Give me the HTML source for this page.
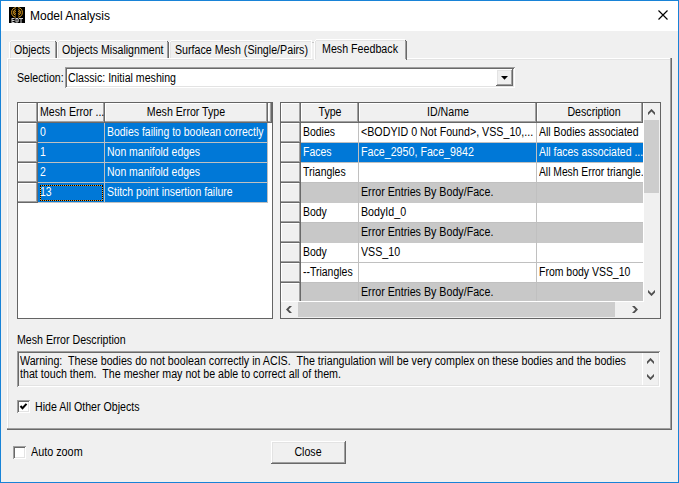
<!DOCTYPE html>
<html><head><meta charset="utf-8">
<style>
*{margin:0;padding:0;box-sizing:border-box}
html,body{width:679px;height:483px;overflow:hidden;background:#f0f0f0}
body{position:relative;font-family:"Liberation Sans",sans-serif;font-size:12px;color:#000}
.a{position:absolute}
.t{position:absolute;white-space:nowrap;line-height:18px;transform-origin:0 0}
.clip{position:absolute;overflow:hidden}
</style></head><body>
<div class="a" style="left:0px;top:0px;width:679px;height:483px;border:1px solid #1883d7"></div>
<div class="a" style="left:1px;top:1px;width:677px;height:30px;background:#fff"></div>
<div class="a" style="left:9px;top:7px;width:16px;height:16px;background:#000;overflow:hidden">
<svg width="16" height="16" viewBox="0 0 16 16">
<g stroke="#e0a020" stroke-width="1" fill="none">
<path d="M6.8 0.6A5.2 4.9 0 0 0 6.8 10.2"/><path d="M6.8 2.6A3.2 2.9 0 0 0 6.8 8.2"/><path d="M6.8 4.3A1.2 1.1 0 0 0 6.8 6.5"/>
<path d="M9.2 0.6A5.2 4.9 0 0 1 9.2 10.2"/><path d="M9.2 2.6A3.2 2.9 0 0 1 9.2 8.2"/><path d="M9.2 4.3A1.2 1.1 0 0 1 9.2 6.5"/>
</g>
<g fill="#cfcfcf"><path d="M2.5 11h3v1h-2v1h2v1h-2v1h2v1h-3z"/><path d="M6.5 11h2.2l1 1v2.5l-1 1h-2.2zM7.5 12v2.5h1v-2.5z"/><path d="M10 11h4v1h-1.5v4h-1v-4h-1.5z"/></g>
</svg></div>
<div class="t" style="left:30px;top:7px;font-size:12px;color:#000;transform:scaleX(1.0);">Model Analysis</div>
<svg class="a" style="left:657px;top:9px" width="12" height="12" viewBox="0 0 12 12"><path d="M1.5 1.5L10.5 10.5M10.5 1.5L1.5 10.5" stroke="#000" stroke-width="1.15"/></svg>
<div class="a" style="left:7px;top:58px;width:665px;height:372px;box-shadow:inset -1px -1px #696969,inset -2px -2px #a0a0a0,inset 1px 1px #fff,inset 2px 2px #e3e3e3"></div>
<div class="a" style="left:11px;top:40px;width:44px;height:1px;background:#fff"></div>
<div class="a" style="left:10px;top:41px;width:1px;height:1px;background:#fff"></div>
<div class="a" style="left:9px;top:42px;width:1px;height:16px;background:#fff"></div>
<div class="a" style="left:10px;top:42px;width:1px;height:16px;background:#e3e3e3"></div>
<div class="a" style="left:11px;top:41px;width:43px;height:1px;background:#e3e3e3"></div>
<div class="a" style="left:55px;top:41px;width:1px;height:1px;background:#696969"></div>
<div class="a" style="left:56px;top:42px;width:1px;height:16px;background:#696969"></div>
<div class="a" style="left:55px;top:42px;width:1px;height:16px;background:#a0a0a0"></div>
<div class="t" style="left:14px;top:41px;font-size:12px;color:#000;transform:scaleX(0.885);">Objects</div>
<div class="a" style="left:59px;top:40px;width:108px;height:1px;background:#fff"></div>
<div class="a" style="left:58px;top:41px;width:1px;height:1px;background:#fff"></div>
<div class="a" style="left:57px;top:42px;width:1px;height:16px;background:#fff"></div>
<div class="a" style="left:58px;top:42px;width:1px;height:16px;background:#e3e3e3"></div>
<div class="a" style="left:59px;top:41px;width:107px;height:1px;background:#e3e3e3"></div>
<div class="a" style="left:167px;top:41px;width:1px;height:1px;background:#696969"></div>
<div class="a" style="left:168px;top:42px;width:1px;height:16px;background:#696969"></div>
<div class="a" style="left:167px;top:42px;width:1px;height:16px;background:#a0a0a0"></div>
<div class="t" style="left:62px;top:41px;font-size:12px;color:#000;transform:scaleX(0.885);">Objects Misalignment</div>
<div class="a" style="left:171px;top:40px;width:141px;height:1px;background:#fff"></div>
<div class="a" style="left:170px;top:41px;width:1px;height:1px;background:#fff"></div>
<div class="a" style="left:169px;top:42px;width:1px;height:16px;background:#fff"></div>
<div class="a" style="left:170px;top:42px;width:1px;height:16px;background:#e3e3e3"></div>
<div class="a" style="left:171px;top:41px;width:140px;height:1px;background:#e3e3e3"></div>
<div class="a" style="left:312px;top:41px;width:1px;height:1px;background:#696969"></div>
<div class="a" style="left:313px;top:42px;width:1px;height:16px;background:#696969"></div>
<div class="a" style="left:312px;top:42px;width:1px;height:16px;background:#a0a0a0"></div>
<div class="t" style="left:175px;top:41px;font-size:12px;color:#000;transform:scaleX(0.89);">Surface Mesh (Single/Pairs)</div>
<div class="a" style="left:311px;top:41px;width:1px;height:18px;background:#fff"></div>
<div class="a" style="left:312px;top:41px;width:2px;height:18px;background:#f0f0f0"></div>
<div class="a" style="left:312px;top:42px;width:2px;height:1px;background:#c8c8c8"></div>
<div class="a" style="left:314px;top:41px;width:92px;height:19px;background:#f0f0f0"></div>
<div class="a" style="left:316px;top:39px;width:89px;height:1px;background:#fff"></div>
<div class="a" style="left:315px;top:40px;width:1px;height:1px;background:#fff"></div>
<div class="a" style="left:314px;top:41px;width:1px;height:19px;background:#fff"></div>
<div class="a" style="left:315px;top:41px;width:1px;height:18px;background:#e3e3e3"></div>
<div class="a" style="left:316px;top:40px;width:88px;height:1px;background:#e3e3e3"></div>
<div class="a" style="left:405px;top:40px;width:1px;height:1px;background:#696969"></div>
<div class="a" style="left:406px;top:41px;width:1px;height:19px;background:#696969"></div>
<div class="a" style="left:405px;top:41px;width:1px;height:18px;background:#a0a0a0"></div>
<div class="t" style="left:322px;top:40px;font-size:12px;color:#000;transform:scaleX(0.89);">Mesh Feedback</div>
<div class="t" style="left:17px;top:69px;font-size:12px;color:#000;transform:scaleX(0.885);">Selection:</div>
<div class="a" style="left:65px;top:67px;width:450px;height:21px;background:#fff;box-shadow:inset 1px 1px #a0a0a0,inset -1px -1px #fff,inset 2px 2px #696969,inset -2px -2px #e3e3e3"></div>
<div class="t" style="left:68px;top:69px;font-size:12px;color:#000;transform:scaleX(0.885);">Classic: Initial meshing</div>
<div class="a" style="left:496px;top:69px;width:17px;height:17px;background:#f0f0f0;box-shadow:inset -1px -1px #696969,inset 1px 1px #fff,inset -2px -2px #a0a0a0,inset 2px 2px #e3e3e3"></div>
<svg class="a" style="left:501px;top:76px" width="8" height="5"><path d="M0 0H7L3.5 3.8Z" fill="#000"/></svg>
<div class="a" style="left:17px;top:102px;width:256px;height:217px;border:1px solid #646464;background:#fff"></div>
<div class="a" style="left:18px;top:103px;width:20px;height:20px;background:#f0f0f0;box-shadow:inset -1px -1px #696969,inset -2px -2px #a0a0a0,inset 1px 1px #fff"></div>
<div class="a" style="left:38px;top:103px;width:67px;height:20px;background:#f0f0f0;box-shadow:inset -1px -1px #696969,inset -2px -2px #a0a0a0,inset 1px 1px #fff"></div>
<div class="t" style="left:40px;top:103px;font-size:12px;color:#000;transform:scaleX(0.885);">Mesh Error ...</div>
<div class="a" style="left:105px;top:103px;width:163px;height:20px;background:#f0f0f0;box-shadow:inset -1px -1px #696969,inset -2px -2px #a0a0a0,inset 1px 1px #fff"></div>
<div class="t" style="left:36px;width:300px;text-align:center;top:103px;font-size:12px;color:#000;transform:scaleX(0.885);transform-origin:50% 0">Mesh Error Type</div>
<div class="a" style="left:268px;top:103px;width:4px;height:20px;background:#f0f0f0;box-shadow:inset -1px -1px #696969,inset -2px -2px #a0a0a0,inset 1px 1px #fff"></div>
<div class="a" style="left:18px;top:123px;width:20px;height:20px;background:#f0f0f0;box-shadow:inset -1px -1px #696969,inset -2px -2px #a0a0a0,inset 1px 1px #fff"></div>
<div class="a" style="left:38px;top:123px;width:66px;height:19px;background:#0078d7"></div>
<div class="a" style="left:105px;top:123px;width:162px;height:19px;background:#0078d7"></div>
<div class="a" style="left:38px;top:142px;width:230px;height:1px;background:#c0c0c0"></div>
<div class="a" style="left:104px;top:123px;width:1px;height:20px;background:#c0c0c0"></div>
<div class="a" style="left:267px;top:123px;width:1px;height:20px;background:#c0c0c0"></div>
<div class="t" style="left:40px;top:123px;font-size:12px;color:#fff;transform:scaleX(0.872);">0</div>
<div class="t" style="left:107px;top:123px;font-size:12px;color:#fff;transform:scaleX(0.872);">Bodies failing to boolean correctly</div>
<div class="a" style="left:18px;top:143px;width:20px;height:20px;background:#f0f0f0;box-shadow:inset -1px -1px #696969,inset -2px -2px #a0a0a0,inset 1px 1px #fff"></div>
<div class="a" style="left:38px;top:143px;width:66px;height:19px;background:#0078d7"></div>
<div class="a" style="left:105px;top:143px;width:162px;height:19px;background:#0078d7"></div>
<div class="a" style="left:38px;top:162px;width:230px;height:1px;background:#c0c0c0"></div>
<div class="a" style="left:104px;top:143px;width:1px;height:20px;background:#c0c0c0"></div>
<div class="a" style="left:267px;top:143px;width:1px;height:20px;background:#c0c0c0"></div>
<div class="t" style="left:40px;top:143px;font-size:12px;color:#fff;transform:scaleX(0.872);">1</div>
<div class="t" style="left:107px;top:143px;font-size:12px;color:#fff;transform:scaleX(0.872);">Non manifold edges</div>
<div class="a" style="left:18px;top:163px;width:20px;height:20px;background:#f0f0f0;box-shadow:inset -1px -1px #696969,inset -2px -2px #a0a0a0,inset 1px 1px #fff"></div>
<div class="a" style="left:38px;top:163px;width:66px;height:19px;background:#0078d7"></div>
<div class="a" style="left:105px;top:163px;width:162px;height:19px;background:#0078d7"></div>
<div class="a" style="left:38px;top:182px;width:230px;height:1px;background:#c0c0c0"></div>
<div class="a" style="left:104px;top:163px;width:1px;height:20px;background:#c0c0c0"></div>
<div class="a" style="left:267px;top:163px;width:1px;height:20px;background:#c0c0c0"></div>
<div class="t" style="left:40px;top:163px;font-size:12px;color:#fff;transform:scaleX(0.872);">2</div>
<div class="t" style="left:107px;top:163px;font-size:12px;color:#fff;transform:scaleX(0.872);">Non manifold edges</div>
<div class="a" style="left:18px;top:183px;width:20px;height:20px;background:#f0f0f0;box-shadow:inset -1px -1px #696969,inset -2px -2px #a0a0a0,inset 1px 1px #fff"></div>
<div class="a" style="left:38px;top:183px;width:66px;height:19px;background:#0078d7"></div>
<div class="a" style="left:105px;top:183px;width:162px;height:19px;background:#0078d7"></div>
<div class="a" style="left:38px;top:202px;width:230px;height:1px;background:#c0c0c0"></div>
<div class="a" style="left:104px;top:183px;width:1px;height:20px;background:#c0c0c0"></div>
<div class="a" style="left:267px;top:183px;width:1px;height:20px;background:#c0c0c0"></div>
<div class="t" style="left:40px;top:183px;font-size:12px;color:#fff;transform:scaleX(0.872);">13</div>
<div class="t" style="left:107px;top:183px;font-size:12px;color:#fff;transform:scaleX(0.872);">Stitch point insertion failure</div>
<div class="a" style="left:40px;top:185px;width:63px;height:16px;border:1px solid #f0a030"></div>
<div class="a" style="left:40px;top:185px;width:63px;height:16px;border:1px dotted #000"></div>
<div class="a" style="left:280px;top:102px;width:381px;height:217px;border:1px solid #646464;background:#fff"></div>
<div class="a" style="left:281px;top:103px;width:20px;height:20px;background:#f0f0f0;box-shadow:inset -1px -1px #696969,inset -2px -2px #a0a0a0,inset 1px 1px #fff"></div>
<div class="a" style="left:301px;top:103px;width:58px;height:20px;background:#f0f0f0;box-shadow:inset -1px -1px #696969,inset -2px -2px #a0a0a0,inset 1px 1px #fff"></div>
<div class="t" style="left:180px;width:300px;text-align:center;top:103px;font-size:12px;color:#000;transform:scaleX(0.885);transform-origin:50% 0">Type</div>
<div class="a" style="left:359px;top:103px;width:178px;height:20px;background:#f0f0f0;box-shadow:inset -1px -1px #696969,inset -2px -2px #a0a0a0,inset 1px 1px #fff"></div>
<div class="t" style="left:298px;width:300px;text-align:center;top:103px;font-size:12px;color:#000;transform:scaleX(0.885);transform-origin:50% 0">ID/Name</div>
<div class="a" style="left:537px;top:103px;width:106px;height:20px;background:#f0f0f0;box-shadow:inset -1px -1px #696969,inset -2px -2px #a0a0a0,inset 1px 1px #fff"></div>
<div class="t" style="left:444px;width:300px;text-align:center;top:103px;font-size:12px;color:#000;transform:scaleX(0.885);transform-origin:50% 0">Description</div>
<div class="clip" style="left:281px;top:123px;width:363px;height:178px">
<div class="a" style="left:0px;top:0px;width:20px;height:20px;background:#f0f0f0;box-shadow:inset -1px -1px #696969,inset -2px -2px #a0a0a0,inset 1px 1px #fff"></div>
<div class="a" style="left:20px;top:0px;width:342px;height:20px;box-shadow:inset 0 -1px #c0c0c0"></div>
<div class="a" style="left:77px;top:0px;width:1px;height:20px;background:#c0c0c0"></div>
<div class="a" style="left:255px;top:0px;width:1px;height:20px;background:#c0c0c0"></div>
<div class="t" style="left:22px;top:0px;font-size:12px;color:#000;transform:scaleX(0.872);">Bodies</div>
<div class="t" style="left:80px;top:0px;font-size:12px;color:#000;transform:scaleX(0.89);">&lt;BODYID 0 Not Found&gt;, VSS_10,...</div>
<div class="clip" style="left:256px;top:0px;width:106px;height:20px"><div class="t" style="left:2px;top:0px;font-size:12px;color:#000;transform:scaleX(0.872);">All Bodies associated</div>
</div>
<div class="a" style="left:0px;top:20px;width:20px;height:20px;background:#f0f0f0;box-shadow:inset -1px -1px #696969,inset -2px -2px #a0a0a0,inset 1px 1px #fff"></div>
<div class="a" style="left:20px;top:20px;width:342px;height:20px;background:#0078d7;box-shadow:inset 0 -1px #c0c0c0"></div>
<div class="a" style="left:77px;top:20px;width:1px;height:20px;background:#c0c0c0"></div>
<div class="a" style="left:255px;top:20px;width:1px;height:20px;background:#c0c0c0"></div>
<div class="t" style="left:22px;top:20px;font-size:12px;color:#fff;transform:scaleX(0.872);">Faces</div>
<div class="t" style="left:80px;top:20px;font-size:12px;color:#fff;transform:scaleX(0.89);">Face_2950, Face_9842</div>
<div class="clip" style="left:256px;top:20px;width:106px;height:20px"><div class="t" style="left:2px;top:0px;font-size:12px;color:#fff;transform:scaleX(0.872);">All faces associated ...</div>
</div>
<div class="a" style="left:0px;top:40px;width:20px;height:20px;background:#f0f0f0;box-shadow:inset -1px -1px #696969,inset -2px -2px #a0a0a0,inset 1px 1px #fff"></div>
<div class="a" style="left:20px;top:40px;width:342px;height:20px;box-shadow:inset 0 -1px #c0c0c0"></div>
<div class="a" style="left:77px;top:40px;width:1px;height:20px;background:#c0c0c0"></div>
<div class="a" style="left:255px;top:40px;width:1px;height:20px;background:#c0c0c0"></div>
<div class="t" style="left:22px;top:40px;font-size:12px;color:#000;transform:scaleX(0.872);">Triangles</div>
<div class="t" style="left:80px;top:40px;font-size:12px;color:#000;transform:scaleX(0.89);"></div>
<div class="clip" style="left:256px;top:40px;width:106px;height:20px"><div class="t" style="left:2px;top:0px;font-size:12px;color:#000;transform:scaleX(0.858);">All Mesh Error triangle...</div>
</div>
<div class="a" style="left:0px;top:60px;width:20px;height:20px;background:#f0f0f0;box-shadow:inset -1px -1px #696969,inset -2px -2px #a0a0a0,inset 1px 1px #fff"></div>
<div class="a" style="left:20px;top:60px;width:342px;height:20px;background:#c8c8c8"></div>
<div class="a" style="left:77px;top:60px;width:1px;height:20px;background:#c0c0c0"></div>
<div class="a" style="left:255px;top:60px;width:1px;height:20px;background:#c0c0c0"></div>
<div class="t" style="left:22px;top:60px;font-size:12px;color:#000;transform:scaleX(0.872);"></div>
<div class="t" style="left:80px;top:60px;font-size:12px;color:#000;transform:scaleX(0.89);">Error Entries By Body/Face.</div>
<div class="clip" style="left:256px;top:60px;width:106px;height:20px"><div class="t" style="left:2px;top:0px;font-size:12px;color:#000;transform:scaleX(0.872);"></div>
</div>
<div class="a" style="left:0px;top:80px;width:20px;height:20px;background:#f0f0f0;box-shadow:inset -1px -1px #696969,inset -2px -2px #a0a0a0,inset 1px 1px #fff"></div>
<div class="a" style="left:20px;top:80px;width:342px;height:20px;box-shadow:inset 0 -1px #c0c0c0"></div>
<div class="a" style="left:77px;top:80px;width:1px;height:20px;background:#c0c0c0"></div>
<div class="a" style="left:255px;top:80px;width:1px;height:20px;background:#c0c0c0"></div>
<div class="t" style="left:22px;top:80px;font-size:12px;color:#000;transform:scaleX(0.872);">Body</div>
<div class="t" style="left:80px;top:80px;font-size:12px;color:#000;transform:scaleX(0.89);">BodyId_0</div>
<div class="clip" style="left:256px;top:80px;width:106px;height:20px"><div class="t" style="left:2px;top:0px;font-size:12px;color:#000;transform:scaleX(0.872);"></div>
</div>
<div class="a" style="left:0px;top:100px;width:20px;height:20px;background:#f0f0f0;box-shadow:inset -1px -1px #696969,inset -2px -2px #a0a0a0,inset 1px 1px #fff"></div>
<div class="a" style="left:20px;top:100px;width:342px;height:20px;background:#c8c8c8"></div>
<div class="a" style="left:77px;top:100px;width:1px;height:20px;background:#c0c0c0"></div>
<div class="a" style="left:255px;top:100px;width:1px;height:20px;background:#c0c0c0"></div>
<div class="t" style="left:22px;top:100px;font-size:12px;color:#000;transform:scaleX(0.872);"></div>
<div class="t" style="left:80px;top:100px;font-size:12px;color:#000;transform:scaleX(0.89);">Error Entries By Body/Face.</div>
<div class="clip" style="left:256px;top:100px;width:106px;height:20px"><div class="t" style="left:2px;top:0px;font-size:12px;color:#000;transform:scaleX(0.872);"></div>
</div>
<div class="a" style="left:0px;top:120px;width:20px;height:20px;background:#f0f0f0;box-shadow:inset -1px -1px #696969,inset -2px -2px #a0a0a0,inset 1px 1px #fff"></div>
<div class="a" style="left:20px;top:120px;width:342px;height:20px;box-shadow:inset 0 -1px #c0c0c0"></div>
<div class="a" style="left:77px;top:120px;width:1px;height:20px;background:#c0c0c0"></div>
<div class="a" style="left:255px;top:120px;width:1px;height:20px;background:#c0c0c0"></div>
<div class="t" style="left:22px;top:120px;font-size:12px;color:#000;transform:scaleX(0.872);">Body</div>
<div class="t" style="left:80px;top:120px;font-size:12px;color:#000;transform:scaleX(0.89);">VSS_10</div>
<div class="clip" style="left:256px;top:120px;width:106px;height:20px"><div class="t" style="left:2px;top:0px;font-size:12px;color:#000;transform:scaleX(0.872);"></div>
</div>
<div class="a" style="left:0px;top:140px;width:20px;height:20px;background:#f0f0f0;box-shadow:inset -1px -1px #696969,inset -2px -2px #a0a0a0,inset 1px 1px #fff"></div>
<div class="a" style="left:20px;top:140px;width:342px;height:20px;box-shadow:inset 0 -1px #c0c0c0"></div>
<div class="a" style="left:77px;top:140px;width:1px;height:20px;background:#c0c0c0"></div>
<div class="a" style="left:255px;top:140px;width:1px;height:20px;background:#c0c0c0"></div>
<div class="t" style="left:22px;top:140px;font-size:12px;color:#000;transform:scaleX(0.872);">--Triangles</div>
<div class="t" style="left:80px;top:140px;font-size:12px;color:#000;transform:scaleX(0.89);"></div>
<div class="clip" style="left:256px;top:140px;width:106px;height:20px"><div class="t" style="left:2px;top:0px;font-size:12px;color:#000;transform:scaleX(0.872);">From body VSS_10</div>
</div>
<div class="a" style="left:0px;top:160px;width:20px;height:20px;background:#f0f0f0;box-shadow:inset -1px -1px #696969,inset -2px -2px #a0a0a0,inset 1px 1px #fff"></div>
<div class="a" style="left:20px;top:160px;width:342px;height:20px;background:#c8c8c8"></div>
<div class="a" style="left:77px;top:160px;width:1px;height:20px;background:#c0c0c0"></div>
<div class="a" style="left:255px;top:160px;width:1px;height:20px;background:#c0c0c0"></div>
<div class="t" style="left:22px;top:160px;font-size:12px;color:#000;transform:scaleX(0.872);"></div>
<div class="t" style="left:80px;top:160px;font-size:12px;color:#000;transform:scaleX(0.89);">Error Entries By Body/Face.</div>
<div class="clip" style="left:256px;top:160px;width:106px;height:20px"><div class="t" style="left:2px;top:0px;font-size:12px;color:#000;transform:scaleX(0.872);"></div>
</div>
</div>
<div class="a" style="left:644px;top:103px;width:16px;height:199px;background:#f0f0f0"></div>
<div class="a" style="left:644px;top:120px;width:15px;height:73px;background:#cdcdcd"></div>
<svg class="a" style="left:648px;top:109px" width="7" height="6"><path d="M0 3.4L3.5 -0.1L7 3.4V6.1L3.5 2.6L0 6.1Z" fill="#505050"/></svg>
<svg class="a" style="left:648px;top:290px" width="7" height="6"><path d="M0 -0.1L3.5 3.4L7 -0.1V2.6L3.5 6.1L0 2.6Z" fill="#505050"/></svg>
<div class="a" style="left:281px;top:302px;width:379px;height:16px;background:#f0f0f0"></div>
<div class="a" style="left:298px;top:302px;width:317px;height:15px;background:#cdcdcd"></div>
<svg class="a" style="left:286px;top:306px" width="6" height="7"><path d="M3.4 0L-0.1 3.5L3.4 7H6.1L2.6 3.5L6.1 0Z" fill="#505050"/></svg>
<svg class="a" style="left:632px;top:306px" width="6" height="7"><path d="M2.6 0L6.1 3.5L2.6 7H-0.1L3.4 3.5L-0.1 0Z" fill="#505050"/></svg>
<div class="t" style="left:17px;top:331px;font-size:12px;color:#000;transform:scaleX(0.885);">Mesh Error Description</div>
<div class="a" style="left:17px;top:351px;width:643px;height:36px;background:#f0f0f0;box-shadow:inset 1px 1px #a0a0a0,inset -1px -1px #fff,inset 2px 2px #696969,inset -2px -2px #e3e3e3"></div>
<div class="t" style="left:20px;top:352px;font-size:12px;color:#000;transform:scaleX(0.89);">Warning:&nbsp; These bodies do not boolean correctly in ACIS.&nbsp; The triangulation will be very complex on these bodies and the bodies</div>
<div class="t" style="left:20px;top:365px;font-size:12px;color:#000;transform:scaleX(0.89);">that touch them.&nbsp; The mesher may not be able to correct all of them.</div>
<div class="a" style="left:642px;top:353px;width:1px;height:32px;background:#fff"></div>
<svg class="a" style="left:647px;top:358px" width="7" height="6"><path d="M0 3.4L3.5 -0.1L7 3.4V6.1L3.5 2.6L0 6.1Z" fill="#505050"/></svg>
<svg class="a" style="left:647px;top:374px" width="7" height="6"><path d="M0 -0.1L3.5 3.4L7 -0.1V2.6L3.5 6.1L0 2.6Z" fill="#505050"/></svg>
<div class="a" style="left:17px;top:400px;width:13px;height:13px;background:#fff;box-shadow:inset 1px 1px #a0a0a0,inset -1px -1px #fff,inset 2px 2px #696969,inset -2px -2px #e3e3e3"></div>
<svg class="a" style="left:19px;top:402px" width="9" height="9"><path d="M1.5 4L3.5 6.2L7.5 1.8" stroke="#000" stroke-width="2" fill="none"/></svg>
<div class="t" style="left:35px;top:398px;font-size:12px;color:#000;transform:scaleX(0.885);">Hide All Other Objects</div>
<div class="a" style="left:13px;top:446px;width:13px;height:13px;background:#fff;box-shadow:inset 1px 1px #a0a0a0,inset -1px -1px #fff,inset 2px 2px #696969,inset -2px -2px #e3e3e3"></div>
<div class="t" style="left:31px;top:443px;font-size:12px;color:#000;transform:scaleX(0.9);">Auto zoom</div>
<div class="a" style="left:271px;top:441px;width:75px;height:23px;background:#f0f0f0;box-shadow:inset -1px -1px #696969,inset 1px 1px #fff,inset -2px -2px #a0a0a0,inset 2px 2px #e3e3e3"></div>
<div class="t" style="left:158px;width:300px;text-align:center;top:443px;font-size:12px;color:#000;transform:scaleX(0.885);transform-origin:50% 0">Close</div>
</body></html>
